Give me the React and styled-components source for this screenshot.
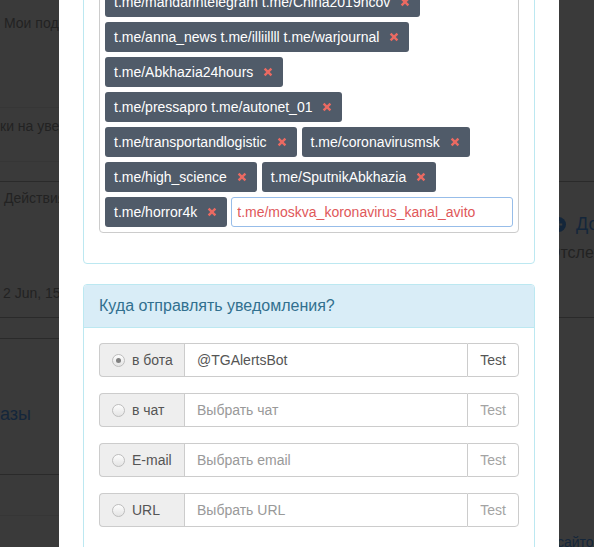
import React from "react";
import styled, { createGlobalStyle } from "styled-components";

const GlobalStyle = createGlobalStyle`
  html, body {
    margin: 0;
    padding: 0;
    background-color: #3a3a3a;
  }
  body {
    font-family: "Liberation Sans", Arial, sans-serif;
    overflow: hidden;
  }
  * { box-sizing: border-box; }
`;

/* ---------- dimmed background page ---------- */

const Screen = styled.main`
  position: relative;
  width: 594px;
  height: 547px;
  overflow: hidden;
  background-color: #3a3a3a;
  font-size: 14px;
`;

const Page = styled.div`
  display: flex;
  flex-direction: column;
  height: 547px;
  background-color: #3a3a3a;
`;

const Band = styled.div`
  display: flex;
  justify-content: space-between;
  flex: none;
  height: ${(p) => p.$h}px;
  background-color: #3a3a3a;
  border-bottom: ${(p) => (p.$line ? "1px solid #2a2a2a" : "0")};
`;

const LeftCol = styled.div`
  display: flex;
  flex-direction: column;
  width: 300px;
  white-space: nowrap;
  background-color: #3a3a3a;
`;

const RightCol = styled.div`
  display: flex;
  flex-direction: column;
  width: 43px;
  white-space: nowrap;
  background-color: #3a3a3a;
`;

const BgText = styled.div`
  margin-top: ${(p) => p.$mt || 0}px;
  margin-left: ${(p) => p.$ml || 0}px;
  padding-left: ${(p) => p.$pl || 0}px;
  font-size: ${(p) => p.$fs || 14}px;
  line-height: ${(p) => p.$lh || 18}px;
  color: ${(p) => p.$color || "#222"};
`;

const Divider = styled.div`
  margin-top: ${(p) => p.$mt || 0}px;
  border-top: 1px solid ${(p) => p.$color || "#363636"};
`;

const SubRow = styled.div`
  flex: none;
  height: ${(p) => p.$h}px;
  border-bottom: 1px solid ${(p) => p.$color || "#2a2a2a"};
`;

const AddLink = styled.div`
  display: flex;
  align-items: center;
  gap: 10px;
  margin-top: ${(p) => p.$mt}px;
  height: 24px;
  font-size: 18px;
  color: #14263a;
  & > svg {
    flex: none;
  }
`;

/* ---------- modal ---------- */

const Modal = styled.div`
  position: absolute;
  left: 59px;
  top: -35px;
  width: 500px;
  min-height: 640px;
  padding: 0 24px;
  background: #fff;
  z-index: 10;
  font-size: 14px;
  color: #555;
`;

const Panel = styled.div`
  border: 1px solid #bce8f1;
  border-radius: 4px;
  margin-bottom: 20px;
  background: #fff;
`;

const PanelHeading = styled.div`
  background: #d9edf7;
  border-bottom: 1px solid #bce8f1;
  border-radius: 3px 3px 0 0;
  padding: 10px 15px;
  color: #31708f;
  font-size: 16px;
  line-height: 22px;
`;

const PanelBody = styled.div`
  padding: 15px 15px ${(p) => p.$pb ?? 15}px;
`;

const TagBox = styled.div`
  display: flex;
  flex-wrap: wrap;
  gap: 5px;
  padding: 5px;
  margin-bottom: 15px;
  border: 1px solid #ccc;
  border-radius: 4px;
  box-shadow: inset 0 1px 1px rgba(0, 0, 0, 0.075);
`;

const Tag = styled.span`
  display: inline-flex;
  align-items: center;
  gap: 10px;
  height: 30px;
  padding: 0 10px 0 9px;
  background: #505b69;
  color: #fff;
  border-radius: 3px;
  white-space: nowrap;
  font-size: 14px;
  & > svg {
    flex: none;
  }
`;

const TagInput = styled.input`
  flex: 1 1 200px;
  min-width: 0;
  height: 30px;
  margin-left: -1px;
  padding: 0 5px;
  border: 1px solid #97bde9;
  border-radius: 3px;
  outline: none;
  font-family: "Liberation Sans", Arial, sans-serif;
  font-size: 14px;
  color: #e0585a;
  background: #fff;
`;

const Rows = styled.div`
  display: flex;
  flex-direction: column;
  gap: 16px;
`;

const InputGroup = styled.div`
  display: flex;
  height: 34px;
`;

const Addon = styled.label`
  flex: none;
  width: 85px;
  display: flex;
  align-items: center;
  gap: 7px;
  padding-left: 12px;
  background: #eee;
  border: 1px solid #ccc;
  border-right: 0;
  border-radius: 4px 0 0 4px;
  color: #555;
  white-space: nowrap;
`;

const Radio = styled.span`
  position: relative;
  flex: none;
  width: 13px;
  height: 13px;
  border-radius: 50%;
  border: 1px solid #bdbdbd;
  background: linear-gradient(#fdfdfd, #e4e4e4);
  &::after {
    content: "";
    display: ${(p) => (p.$checked ? "block" : "none")};
    position: absolute;
    left: 3px;
    top: 3px;
    width: 5px;
    height: 5px;
    border-radius: 50%;
    background: #808080;
  }
`;

const Field = styled.input`
  flex: 1;
  min-width: 0;
  height: 34px;
  padding: 0 12px;
  border: 1px solid #ccc;
  border-right: 0;
  outline: none;
  font-family: "Liberation Sans", Arial, sans-serif;
  font-size: 14px;
  color: #555;
  background: #fff;
  &::placeholder {
    color: #999;
  }
`;

const TestButton = styled.button`
  flex: none;
  width: 52px;
  height: 34px;
  padding: 0;
  border: 1px solid #ccc;
  border-radius: 0 4px 4px 0;
  background: #fff;
  font-family: "Liberation Sans", Arial, sans-serif;
  font-size: 14px;
  color: ${(p) => (p.$disabled ? "#a3a3a3" : "#555")};
`;

const CloseIcon = () => (
  <svg width="10" height="10" viewBox="0 0 10 10" aria-hidden="true">
    <path
      d="M1.6 1.6 L8.4 8.4 M8.4 1.6 L1.6 8.4"
      stroke="#ea6a62"
      strokeWidth="2.4"
      strokeLinecap="butt"
    />
  </svg>
);

const PlusCircle = () => (
  <svg width="15" height="15" viewBox="0 0 16 16" aria-hidden="true">
    <circle cx="8" cy="8" r="8" fill="#14263a" />
    <path d="M8 4v8M4 8h8" stroke="#3a3a3a" strokeWidth="2" />
  </svg>
);

const tags = [
  "t.me/mandarintelegram t.me/China2019ncov",
  "t.me/anna_news t.me/illiillll t.me/warjournal",
  "t.me/Abkhazia24hours",
  "t.me/pressapro t.me/autonet_01",
  "t.me/transportandlogistic",
  "t.me/coronavirusmsk",
  "t.me/high_science",
  "t.me/SputnikAbkhazia",
  "t.me/horror4k",
];

const targets = [
  { label: "в бота", value: "@TGAlertsBot", placeholder: "", checked: true },
  { label: "в чат", value: "", placeholder: "Выбрать чат" },
  { label: "E-mail", value: "", placeholder: "Выбрать email" },
  { label: "URL", value: "", placeholder: "Выбрать URL" },
];

export default function App() {
  return (
    <>
      <GlobalStyle />
      <Screen>
        <Page>
          <Band $h={182} $line>
            <LeftCol>
              <BgText $mt={14} $pl={4}>Мои подписки</BgText>
              <Divider $mt={75} />
              <BgText $mt={9}>ки на уведомления</BgText>
              <Divider $mt={26} />
            </LeftCol>
            <RightCol />
          </Band>
          <Band $h={136} $line>
            <LeftCol>
              <BgText $mt={7} $pl={4}>Действия</BgText>
              <BgText $mt={77} $pl={3}>2 Jun, 15:42</BgText>
            </LeftCol>
            <RightCol>
              <AddLink $mt={30}>
                <PlusCircle />
                <span>Добавить</span>
              </AddLink>
              <BgText $mt={8} $fs={16} $ml={-3}>
                Отслеживать
              </BgText>
            </RightCol>
          </Band>
          <Band $h={229}>
            <LeftCol>
              <SubRow $h={21} />
              <SubRow $h={136}>
                <BgText $mt={64} $fs={18} $lh={22} $color="#14263a">
                  азы
                </BgText>
              </SubRow>
              <SubRow $h={41} $color="#363636" />
            </LeftCol>
            <RightCol>
              <BgText $mt={215} $pl={6} $color="#14263a">
                сайтов
              </BgText>
            </RightCol>
          </Band>
        </Page>
        <Modal>
          <Panel>
            <PanelBody>
              <TagBox>
                {tags.map((t) => (
                  <Tag key={t}>
                    {t}
                    <CloseIcon />
                  </Tag>
                ))}
                <TagInput defaultValue="t.me/moskva_koronavirus_kanal_avito" />
              </TagBox>
            </PanelBody>
          </Panel>
          <Panel>
            <PanelHeading>Куда отправлять уведомления?</PanelHeading>
            <PanelBody $pb={31}>
              <Rows>
                {targets.map((t) => (
                  <InputGroup key={t.label}>
                    <Addon>
                      <Radio $checked={t.checked} />
                      {t.label}
                    </Addon>
                    <Field
                      readOnly
                      defaultValue={t.value}
                      placeholder={t.placeholder}
                    />
                    <TestButton $disabled={!t.checked}>Test</TestButton>
                  </InputGroup>
                ))}
              </Rows>
            </PanelBody>
          </Panel>
        </Modal>
      </Screen>
    </>
  );
}
